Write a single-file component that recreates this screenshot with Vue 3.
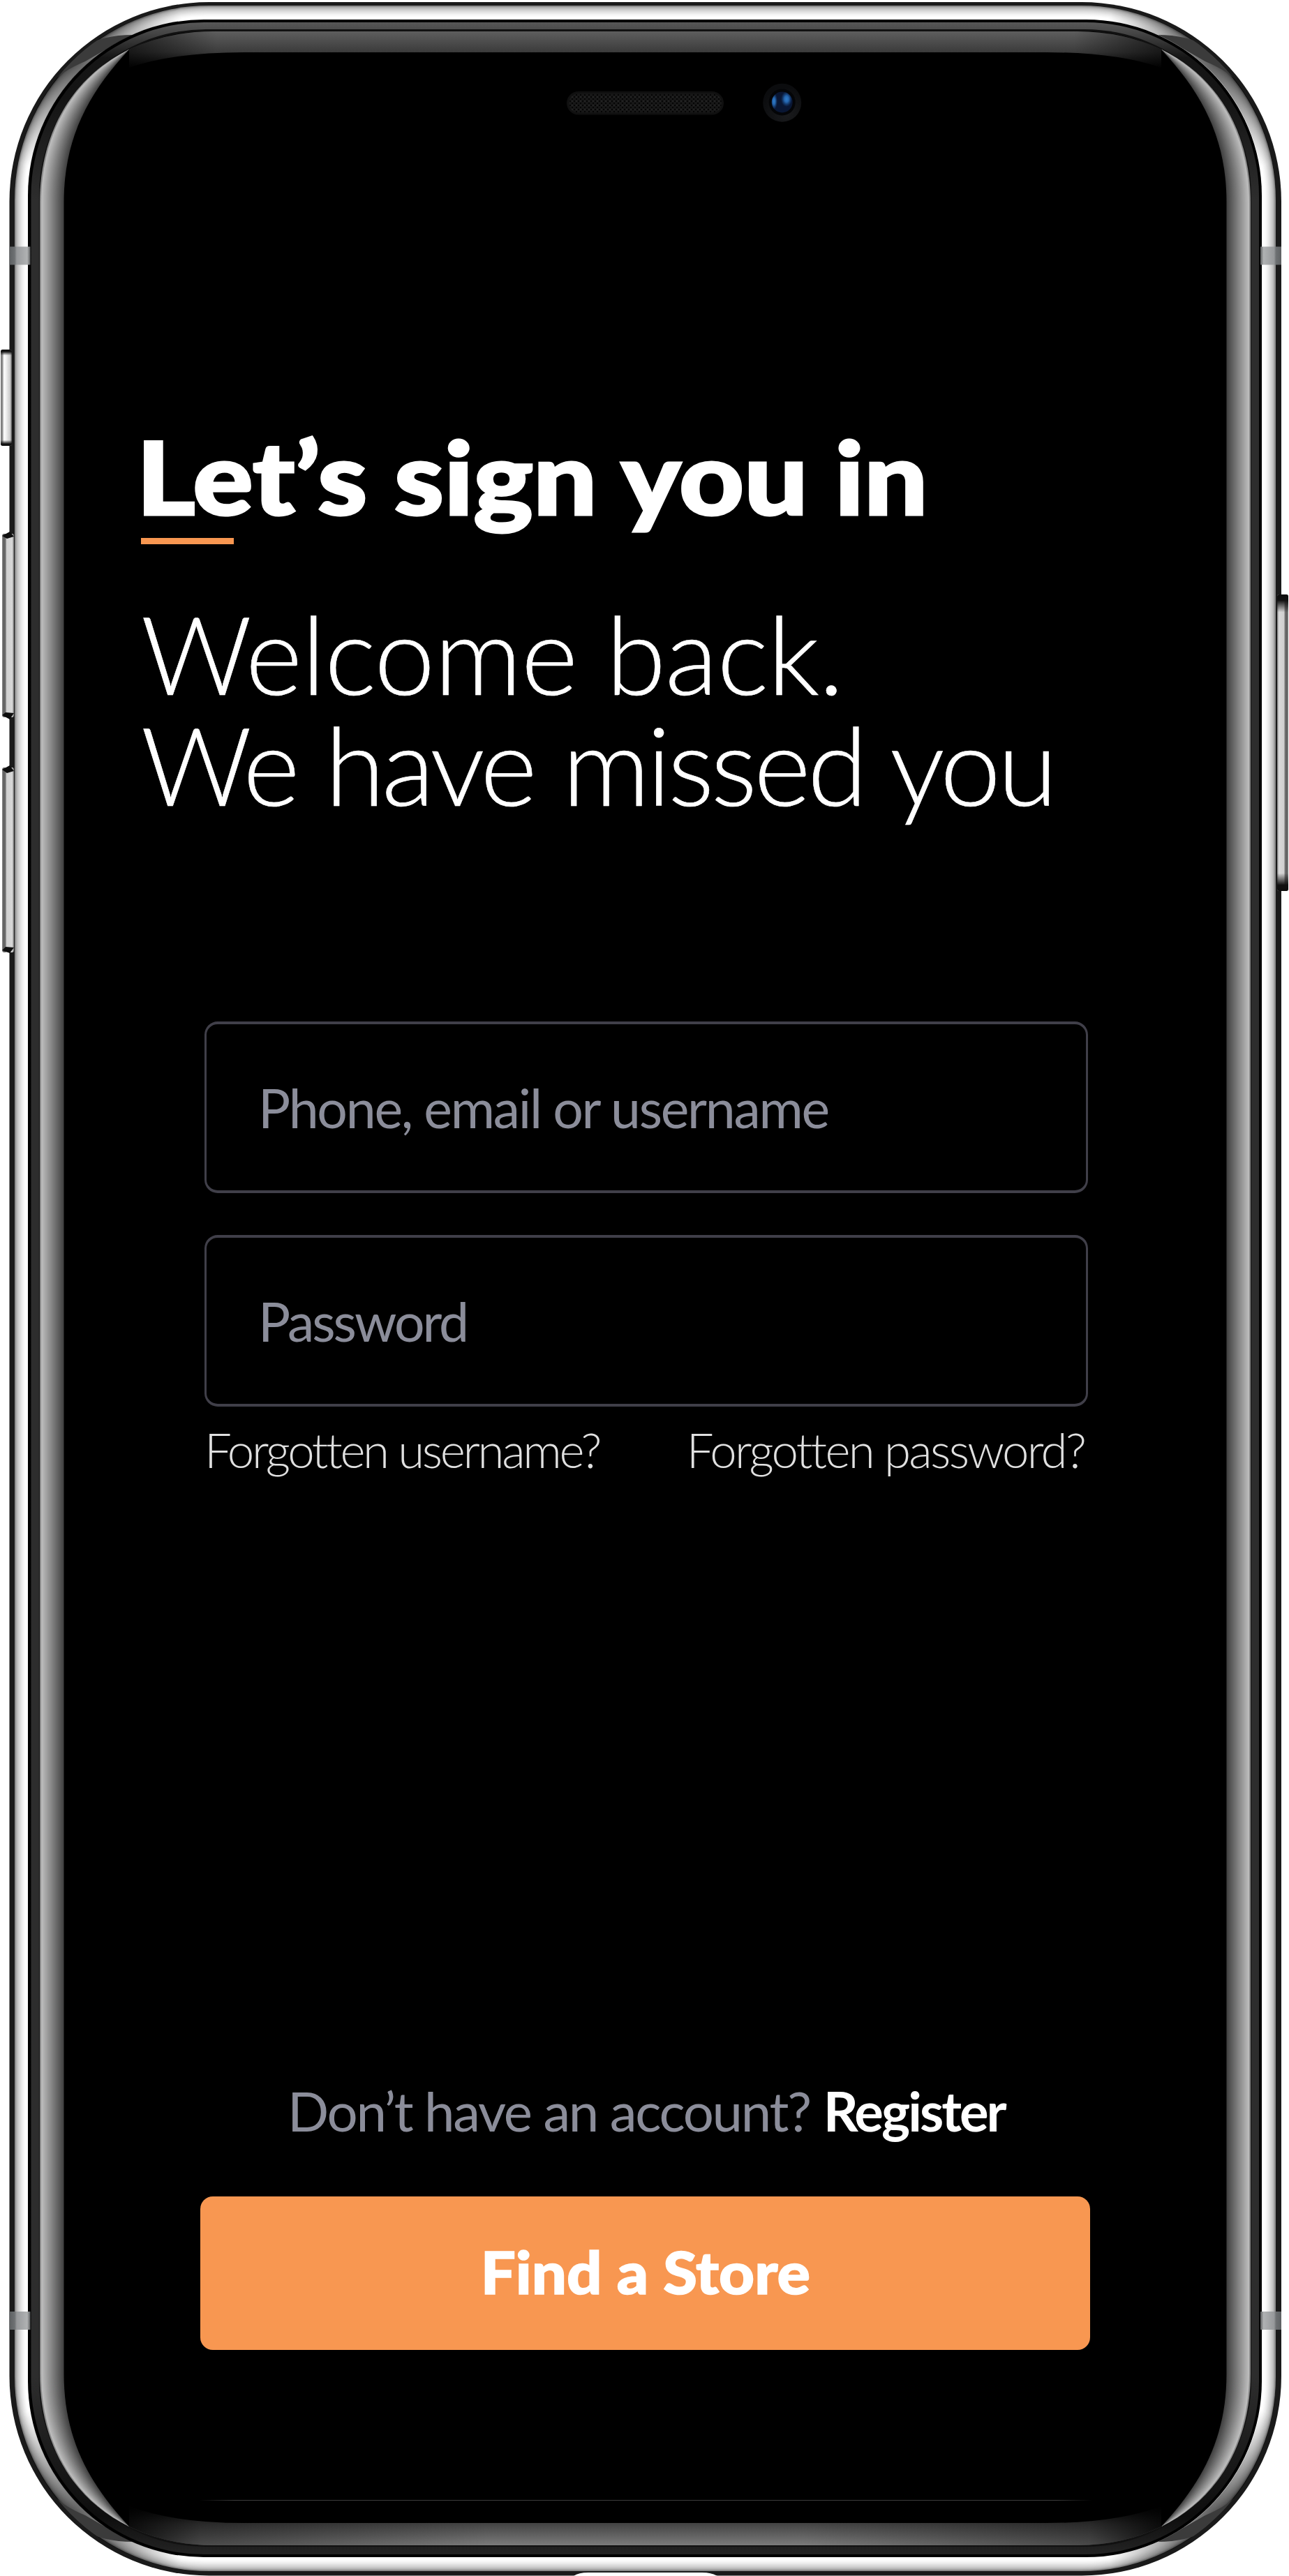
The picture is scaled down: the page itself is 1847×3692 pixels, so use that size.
<script setup>
const mix = (a, b, t) => a + (b - a) * t
const grey = (v) => `rgb(${Math.round(v)},${Math.round(v)},${Math.round(v)})`

// Polished steel band, built from nested outlines
const steel = [140, 178, 198, 212, 224, 235, 244, 251, 255, 255].map((v, i) => {
  const t = i / 10
  const x = mix(21, 40, t)
  const y = mix(8, 28, t)
  return { x, y, w: mix(1828, 1808, t) - x, h: mix(3685, 3665, t) - y, r: mix(279, 253, t), c: grey(v) }
})

// Curved glass reflection along the side of the display
const glass = Array.from({ length: 18 }, (_, i) => {
  const t = i / 17
  const x = mix(57, 91.5, t)
  const cy = mix(195, 200, t)
  const bx = mix(100, 125, t)
  const by = mix(112, 135, t)
  const m = (y) => 3692 - y
  return {
    d: `M185 71C${bx} ${by} ${x} ${cy} ${x} 290V${m(290)}C${x} ${m(cy)} ${bx} ${m(by)} 185 ${m(71)}Z`,
    c: i === 0 ? '#8c8c8c' : i === 17 ? '#000' : grey(mix(188, 68, (i - 1) / 15)),
  }
})

const fields = [
  { id: 'username', label: 'Phone, email or username' },
  { id: 'password', label: 'Password' },
]
</script>

<template>
  <main class="phone">
    <svg class="frame" viewBox="0 0 1847 3692" width="1847" height="3692" aria-hidden="true">
      <defs>
        <linearGradient id="rim" gradientUnits="userSpaceOnUse" x1="0" y1="32" x2="0" y2="3661">
          <stop offset="0" stop-color="#575757" />
          <stop offset=".004" stop-color="#464646" />
          <stop offset=".014" stop-color="#151515" />
          <stop offset=".03" stop-color="#141414" />
          <stop offset=".07" stop-color="#2d2d2d" />
          <stop offset=".93" stop-color="#2d2d2d" />
          <stop offset=".985" stop-color="#0d0d0d" />
          <stop offset="1" stop-color="#242424" />
        </linearGradient>
        <linearGradient id="topGlass" gradientUnits="userSpaceOnUse" x1="0" y1="45" x2="0" y2="96">
          <stop offset="0" stop-color="#5e5e5e" />
          <stop offset=".58" stop-color="#3b3b3b" />
          <stop offset="1" stop-color="#050505" />
        </linearGradient>
        <linearGradient id="bottomGlass" gradientUnits="userSpaceOnUse" x1="0" y1="3595" x2="0" y2="3648">
          <stop offset="0" stop-color="#060606" />
          <stop offset=".42" stop-color="#444" />
          <stop offset="1" stop-color="#7b7b7b" />
        </linearGradient>
        <linearGradient id="shade" gradientUnits="userSpaceOnUse" x1="185" y1="0" x2="700" y2="0">
          <stop offset="0" stop-color="#000" stop-opacity=".85" />
          <stop offset=".2" stop-color="#000" stop-opacity=".4" />
          <stop offset="1" stop-color="#000" stop-opacity="0" />
        </linearGradient>
        <linearGradient id="topShade" gradientUnits="userSpaceOnUse" x1="185" y1="0" x2="310" y2="0">
          <stop offset="0" stop-color="#000" stop-opacity=".6" />
          <stop offset="1" stop-color="#000" stop-opacity="0" />
        </linearGradient>
        <radialGradient id="cornerShade" gradientUnits="userSpaceOnUse" cx="108" cy="88" r="165">
          <stop offset="0" stop-color="#000" stop-opacity=".62" />
          <stop offset=".4" stop-color="#000" stop-opacity=".4" />
          <stop offset="1" stop-color="#000" stop-opacity="0" />
        </radialGradient>
        <linearGradient id="antenna" x1="0" x2="1" y1="0" y2="0">
          <stop offset="0" stop-color="#5e6163" />
          <stop offset=".25" stop-color="#6e7173" />
          <stop offset=".35" stop-color="#97999b" />
          <stop offset=".85" stop-color="#b0b2b3" />
          <stop offset="1" stop-color="#5a5c5d" />
        </linearGradient>
        <linearGradient id="key" x1="0" x2="1" y1="0" y2="0">
          <stop offset="0" stop-color="#8a8a8a" />
          <stop offset=".14" stop-color="#5c5c5c" />
          <stop offset=".3" stop-color="#777" />
          <stop offset=".38" stop-color="#cfcfcf" />
          <stop offset=".85" stop-color="#d8d8d8" />
          <stop offset="1" stop-color="#777" />
        </linearGradient>
        <linearGradient id="mute" x1="0" x2="1" y1="0" y2="0">
          <stop offset="0" stop-color="#777" />
          <stop offset=".15" stop-color="#8c8c8c" />
          <stop offset=".3" stop-color="#fff" />
          <stop offset=".5" stop-color="#eee" />
          <stop offset=".85" stop-color="#c8c8c8" />
          <stop offset="1" stop-color="#555" />
        </linearGradient>
        <linearGradient id="ends" x1="0" x2="0" y1="0" y2="1">
          <stop offset="0" stop-color="#0d0d0d" />
          <stop offset=".02" stop-color="#111" />
          <stop offset=".06" stop-color="#111" stop-opacity="0" />
          <stop offset=".94" stop-color="#111" stop-opacity="0" />
          <stop offset=".98" stop-color="#111" />
          <stop offset="1" stop-color="#0d0d0d" />
        </linearGradient>
        <linearGradient id="hair" x1="0" x2="1" y1="0" y2="0">
          <stop offset="0" stop-color="#3c3c3c" stop-opacity="0" />
          <stop offset=".04" stop-color="#3c3c3c" />
          <stop offset=".96" stop-color="#3c3c3c" />
          <stop offset="1" stop-color="#3c3c3c" stop-opacity="0" />
        </linearGradient>
        <pattern id="mesh" width="6" height="6" patternUnits="userSpaceOnUse">
          <rect width="6" height="6" fill="#171717" />
          <rect width="2" height="2" fill="#050505" />
          <rect x="3" y="3" width="2" height="2" fill="#050505" />
          <rect x="3" width="2" height="2" fill="#222" />
        </pattern>
        <radialGradient id="lensRing" cx=".6" cy=".8" r=".7">
          <stop offset="0" stop-color="#1a1b1d" />
          <stop offset="1" stop-color="#0b0c0e" />
        </radialGradient>
        <radialGradient id="glint">
          <stop offset="0" stop-color="#2f7cc9" />
          <stop offset=".4" stop-color="#2566ae" />
          <stop offset="1" stop-color="#174a8c" stop-opacity="0" />
        </radialGradient>
        <clipPath id="bandClip">
          <path clip-rule="evenodd" d="M20 420V286A278 278 0 0 1 298 8H420V28H293A253 253 0 0 0 40 281V420Z" />
        </clipPath>
        <clipPath id="lensClip"><circle cx="1120.7" cy="146.500" r="15" /></clipPath>
        <g id="corner">
          <g clip-path="url(#bandClip)">
            <rect width="300" height="300" fill="url(#cornerShade)" />
            <path d="M190 50Q148 50 118 67L70 122Q90 101 122 88L150 72Z" fill="#3b3b3b" />
          </g>
        </g>
      </defs>

      <rect x="13.500" y="3" width="1822.500" height="3688.500" rx="286" fill="#1a1a1a" />
      <rect v-for="(s, i) in steel" :key="i" :x="s.x" :y="s.y" :width="s.w" :height="s.h" :rx="s.r" :fill="s.c" />
      <use href="#corner" />
      <use href="#corner" transform="translate(1849 0) scale(-1 1)" />
      <use href="#corner" transform="translate(0 3693) scale(1 -1)" />
      <use href="#corner" transform="translate(1849 3693) scale(-1 -1)" />
      <rect x="40" y="28" width="1768" height="3637" rx="252" fill="#000" />
      <rect x="44.500" y="32" width="1759.500" height="3629" rx="248" fill="url(#rim)" />
      <rect x="56" y="42" width="1737" height="3608" rx="239" fill="#111" />
      <rect x="58" y="45" width="1733" height="3602" rx="237" fill="#000" />

      <path d="M185 71Q240 45 305 45H1544Q1609 45 1664 71V97Q1600 75 1500 75H349Q249 75 185 97Z" fill="url(#topGlass)" />
      <path d="M185 3621Q240 3648 305 3648H1544Q1609 3648 1664 3621V3592Q1600 3616 1500 3616H349Q249 3616 185 3592Z" fill="url(#bottomGlass)" />
      <path d="M185 71Q240 45 305 45H345V101H185Z" fill="url(#topShade)" />
      <path d="M185 71Q240 45 305 45H345V101H185Z" fill="url(#topShade)" transform="translate(1849 0) scale(-1 1)" />
      <path d="M185 3621Q240 3648 305 3648H700V3590H185Z" fill="url(#shade)" />
      <path d="M185 3621Q240 3648 305 3648H700V3590H185Z" fill="url(#shade)" transform="translate(1849 0) scale(-1 1)" />

      <g>
        <path v-for="(g, i) in glass" :key="i" :d="g.d" :fill="g.c" />
      </g>
      <g transform="translate(1849 0) scale(-1 1)">
        <path v-for="(g, i) in glass" :key="i" :d="g.d" :fill="g.c" />
      </g>

      <g id="bands">
        <rect x="13.500" y="353.500" width="30" height="26" fill="url(#antenna)" />
        <rect x="13.500" y="3313" width="30" height="26" fill="url(#antenna)" />
      </g>
      <use href="#bands" transform="translate(1849.500 0) scale(-1 1)" />

      <rect x="1" y="501" width="16" height="138" rx="3" fill="url(#mute)" />
      <rect x="1" y="501" width="16" height="138" rx="3" fill="url(#ends)" />
      <rect x="3" y="765" width="17" height="263" rx="3" fill="url(#key)" />
      <path d="M3 768L14 762L20 769L10 772ZM3 1025L14 1031L20 1022L8 1021Z" fill="#0e0e0e" />
      <rect x="3" y="1100" width="17" height="265" rx="3" fill="url(#key)" />
      <path d="M3 1103L14 1097L20 1105L10 1108ZM3 1362L14 1366L20 1358L8 1357Z" fill="#0e0e0e" />
      <rect x="1830" y="852" width="16" height="425" rx="3" fill="url(#key)" transform="translate(3676 0) scale(-1 1)" />
      <rect x="1830" y="852" width="16" height="425" rx="3" fill="url(#ends)" />

      <path d="M822 3692Q829 3687 843 3687H1006Q1020 3687 1028 3692Z" fill="#fff" />
      <rect x="285" y="3583" width="1280" height="1" fill="url(#hair)" />

      <rect x="812" y="131" width="225" height="33.500" rx="16.750" fill="#101010" />
      <rect x="815" y="134" width="219" height="27.500" rx="13.750" fill="url(#mesh)" />
      <circle cx="1120.700" cy="147.200" r="27.500" fill="url(#lensRing)" />
      <circle cx="1120.700" cy="146.500" r="19" fill="#040507" />
      <circle cx="1120.700" cy="146.500" r="15" fill="#091633" />
      <g clip-path="url(#lensClip)">
        <ellipse cx="1109" cy="145" rx="5" ry="12" fill="url(#glint)" />
        <ellipse cx="1127" cy="142" rx="8" ry="11" fill="url(#glint)" />
      </g>
    </svg>

    <section class="screen">
      <header class="intro">
        <h1 class="title">Let’s sign you in</h1>
        <div class="accent"></div>
        <p class="welcome">
          <span class="line first">Welcome back.</span>
          <span class="line second">We have missed you</span>
        </p>
      </header>

      <form class="form" @submit.prevent>
        <div v-for="f in fields" :key="f.id" class="field"><span :class="f.id">{{ f.label }}</span></div>
        <div class="links">
          <a class="forgot-user">Forgotten username?</a>
          <a class="forgot-pass">Forgotten password?</a>
        </div>
      </form>

      <footer class="actions">
        <p class="signup"><span class="ask">Don’t have an account?</span><a class="register">Register</a></p>
        <button class="store" type="button"><span>Find a Store</span></button>
      </footer>
    </section>
  </main>
</template>

<style>
html, body { margin: 0; background: #fff; overflow: hidden; }
</style>

<style scoped>
.phone {
  position: relative;
  width: 1847px;
  height: 3692px;
  overflow: hidden;
  font-family: Lato, "Open Sans", sans-serif;
  color: #fff;
}
.frame { position: absolute; inset: 0; display: block; }
.screen {
  position: relative;
  box-sizing: border-box;
  height: 3692px;
  padding: 623px 285px 324px 202px;
  display: flex;
  flex-direction: column;
}
h1, p { margin: 0; white-space: nowrap; }
.title {
  width: max-content;
  margin-left: -6px;
  font-size: 144px;
  line-height: 120px;
  font-weight: 900;
  -webkit-text-stroke: 3px #fff;
  transform: scaleX(1.121);
  transform-origin: 5px 0;
}
.accent { width: 133px; height: 9px; margin-top: 28px; background: #f89751; }
.welcome { margin-top: 76px; font-size: 156px; line-height: 159px; font-weight: 300; -webkit-text-stroke: .6px #fff; }
.line { display: block; }
.first { letter-spacing: -1.1px; }
.second { letter-spacing: -4.6px; word-spacing: 3px; }
.form { margin: 290px 3px 0 91px; }
.field {
  box-sizing: border-box;
  height: 246px;
  border: 4px solid #403f49;
  border-left-width: 3px;
  border-right-width: 3px;
  border-radius: 19px;
  padding: 0 0 1px 74px;
  display: flex;
  align-items: center;
  font-size: 77px;
  color: #8b8d9a;
}
.field + .field { margin-top: 60px; }
.field span { white-space: nowrap; }
.username { letter-spacing: -2.3px; }
.password { letter-spacing: -3px; }
.links {
  display: flex;
  justify-content: space-between;
  margin-top: 22px;
  padding-right: 5px;
  font-size: 69px;
  line-height: 80px;
  font-weight: 300;
  color: #e0e0e0;
}
.links a { white-space: nowrap; }
.forgot-user { letter-spacing: -3.3px; }
.forgot-pass { letter-spacing: -2.7px; }
.actions { margin-top: auto; margin-left: 85px; }
.signup {
  display: flex;
  margin-left: 125px;
  font-size: 78px;
  line-height: 90px;
  color: #8b8d9a;
}
.ask { letter-spacing: -2.3px; }
.register { margin-left: 19px; color: #fff; font-weight: 700; letter-spacing: -3px; }
.store {
  display: flex;
  justify-content: center;
  align-items: center;
  width: 1275px;
  height: 220px;
  margin-top: 78px;
  padding: 0 0 5px;
  border: 0;
  border-radius: 18px;
  background: #f89751;
  color: #fff;
  font: 900 84px Lato, "Open Sans", sans-serif;
}
.store span { transform: scaleX(1.055); -webkit-text-stroke: 1.5px #fff; }
</style>
